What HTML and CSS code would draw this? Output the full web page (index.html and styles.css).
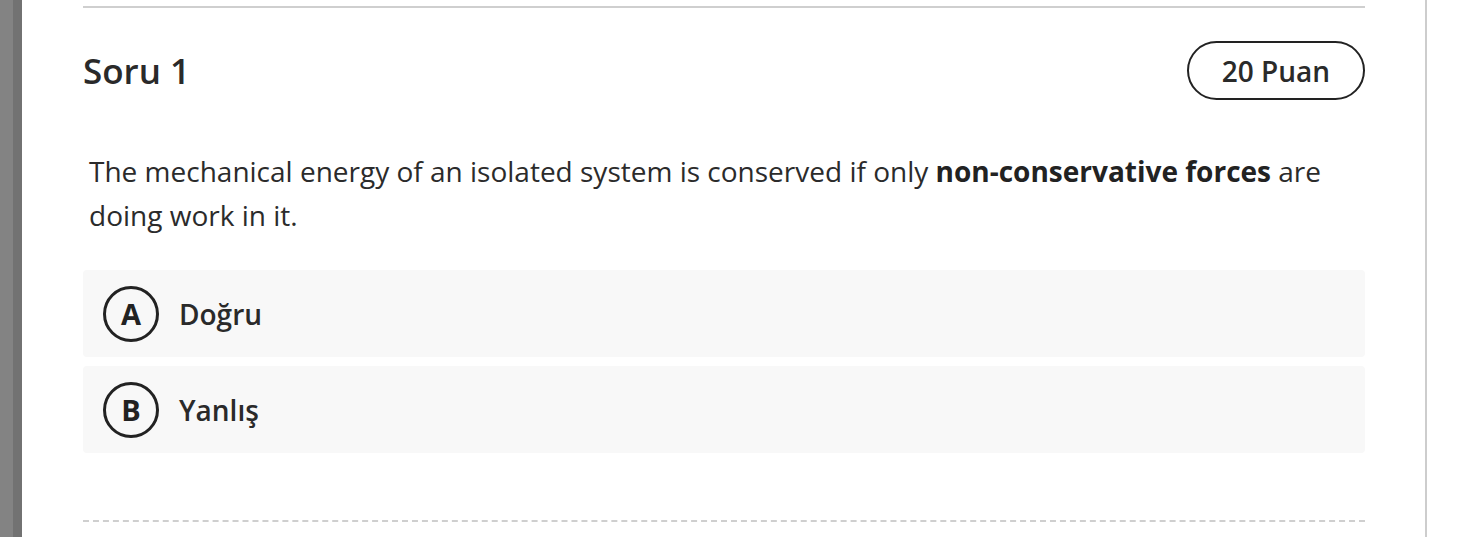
FILE: index.html
```html
<!DOCTYPE html>
<html lang="tr">
<head>
<meta charset="utf-8">
<link rel="stylesheet" href="styles.css">
</head>
<body>
<div class="page">
  <div class="sidebar"><div class="sb-light"></div><div class="sb-dark"></div></div>
  <main class="panel">
    <div class="content">
      <div class="top-rule"></div>
      <div class="q-head">
        <h2 class="q-title">Soru 1</h2>
        <span class="points">20 Puan</span>
      </div>
      <p class="q-text">The mechanical energy of an isolated system is conserved if only <strong>non-conservative forces</strong> are doing work in it.</p>
      <div class="options">
        <div class="option"><span class="letter">A</span><span class="label">Doğru</span></div>
        <div class="option"><span class="letter">B</span><span class="label">Yanlış</span></div>
      </div>
      <div class="dash-rule"></div>
    </div>
  </main>
  <div class="outside"></div>
</div>
</body>
</html>
```
FILE: styles.css
```css
* { box-sizing: border-box; }
html, body { margin: 0; padding: 0; background: #fff; }
body { font-family: "Open Sans", "Noto Sans", sans-serif; color: #262626; overflow: hidden; }
.page { display: flex; height: 537px; }
.sidebar { display: flex; width: 22px; flex: none; }
.sb-light { width: 13px; background: #838383; }
.sb-dark { width: 9px; background: #727272; }
.panel { width: 1405px; flex: none; border-right: 2px solid #cdcdcd; background: #fff; }
.outside { flex: 1; background: #fff; }
.content { padding: 6px 60px 0 61px; }
.top-rule { height: 2px; background: #cfcfcf; }
.q-head { display: flex; justify-content: space-between; align-items: center; margin-top: 33px; }
.q-title { margin: 0; font-size: 35px; font-weight: 600; line-height: 58px; color: #2a2a2a; }
.points { height: 59px; padding: 0 33px; border: 2px solid #222; border-radius: 30px; display: flex; align-items: center; font-size: 28px; font-weight: 600; color: #2a2a2a; }
.q-text { margin: 49px 0 0 6px; font-size: 28px; line-height: 44px; color: #2b2b2b; }
.q-text strong { font-weight: 700; color: #222; }
.options { display: flex; flex-direction: column; gap: 9px; margin-top: 33px; }
.option { height: 87px; background: #f8f8f8; border-radius: 4px; display: flex; align-items: center; padding-left: 20px; }
.letter { width: 56px; height: 56px; border: 3px solid #222; border-radius: 50%; display: flex; align-items: center; justify-content: center; font-size: 29px; font-weight: 700; color: #222; flex: none; }
.label { margin-left: 20px; font-size: 28px; font-weight: 600; color: #2a2a2a; }
.dash-rule { margin-top: 67px; border-top: 2px dashed #cfcfcf; }
```
